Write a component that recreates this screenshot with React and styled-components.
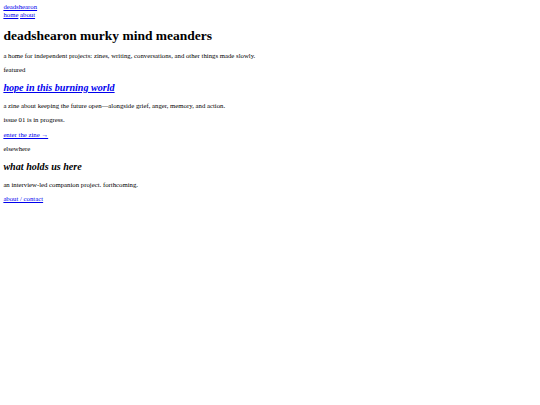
import React from "react";
import styled, { createGlobalStyle } from "styled-components";

const S = 0.421875;
const px = (n) => `${n * S}px`;

const Global = createGlobalStyle`
  html, body { background: #fff; }
  body {
    margin: ${px(8)};
    font-family: "Liberation Serif", "Times New Roman", serif;
    font-size: ${px(16)};
    line-height: 1.125;
    color: #000;
  }
`;

const Header = styled.header`
  display: block;
`;

const Link = styled.a`
  color: #0000ee;
  text-decoration: underline;
`;

const Nav = styled.nav`
  display: block;
`;

const Title = styled.h1`
  font-size: ${px(32)};
  line-height: 1.125;
  font-weight: bold;
  margin: ${px(21.44)} 0;
`;

const Para = styled.p`
  margin: ${px(16)} 0;
`;

const Label = styled.p`
  margin: ${px(16)} 0;
`;

const WorkTitle = styled.h2`
  font-size: ${px(24)};
  line-height: 1.125;
  font-weight: bold;
  font-style: italic;
  margin: ${px(19.92)} 0;
`;

const Section = styled.section`
  display: block;
`;

export default function App() {
  return (
    <>
      <Global />
      <Header>
        <Link href="#">deadshearon</Link>
        <Nav>
          <Link href="#">home</Link> <Link href="#">about</Link>
        </Nav>
      </Header>
      <main>
        <Title>deadshearon murky mind meanders</Title>
        <Para>a home for independent projects: zines, writing, conversations, and other things made slowly.</Para>
        <Section>
          <Label>featured</Label>
          <WorkTitle><Link href="#">hope in this burning world</Link></WorkTitle>
          <Para>a zine about keeping the future open—alongside grief, anger, memory, and action.</Para>
          <Para>issue 01 is in progress.</Para>
          <Para><Link href="#">enter the zine →</Link></Para>
        </Section>
        <Section>
          <Label>elsewhere</Label>
          <WorkTitle>what holds us here</WorkTitle>
          <Para>an interview-led companion project. forthcoming.</Para>
        </Section>
        <Para><Link href="#">about / contact</Link></Para>
      </main>
    </>
  );
}
